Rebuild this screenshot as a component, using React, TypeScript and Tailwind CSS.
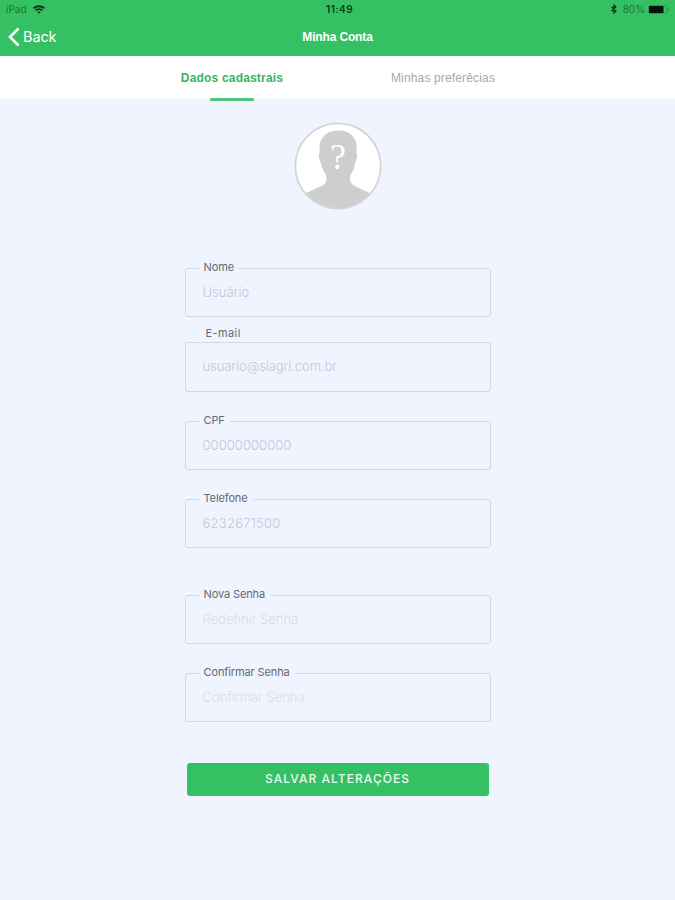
import { clsx } from 'clsx';

const fields = [
  { label: 'Nome', value: 'Usuário', box: 'mt-[58px] h-[49px]', text: 'text-[#c3c6d6]' },
  { label: 'E-mail', value: 'usuario@siagri.com.br', box: 'mt-[25px] h-[50px]', text: 'text-[#c3c6d6] tracking-[-0.08px]', raised: true },
  { label: 'CPF', value: '00000000000', box: 'mt-[29px] h-[49px]', text: 'text-[#c3c6d6] tracking-[0.05px]' },
  { label: 'Telefone', value: '6232671500', box: 'mt-[29px] h-[49px]', text: 'text-[#c3c6d6] tracking-[0.25px]' },
  { label: 'Nova Senha', placeholder: 'Redefinir Senha', box: 'mt-[47px] h-[49px]', text: 'text-[#d9dce6]' },
  { label: 'Confirmar Senha', placeholder: 'Confirmar Senha', box: 'mt-[29px] h-[49px]', text: 'text-[#d9dce6]' },
];

function StatusBar() {
  return (
    <div className="flex h-[18px] items-center px-[6px] text-[10px] leading-none text-[#1d7038]">
      <div className="flex flex-1 items-center gap-[6px]">
        <span>iPad</span>
        <svg width="12" height="9" viewBox="0 0 12 9" fill="none" stroke="#0b3519" strokeWidth="2">
          <path d="M0.7 3.2C3.7 0.5 8.3 0.5 11.3 3.2" />
          <path d="M2.8 5.5C4.6 3.8 7.4 3.8 9.2 5.5" />
          <path d="M6 8.8L4.3 7.1C5.3 6.3 6.7 6.3 7.7 7.1Z" fill="#0b3519" stroke="none" />
        </svg>
      </div>
      <span className="relative left-[2px] font-semibold tracking-[0.45px] text-[#0c3a1b]">11:49</span>
      <div className="flex flex-1 items-center justify-end">
        <svg width="6" height="10" viewBox="0 0 6 10" fill="none" stroke="#0b3519" strokeWidth="1.2">
          <path d="M0.6 2.7L5 7L3 9V1L5 3L0.6 7.3" />
        </svg>
        <span className="ml-[6px]">80%</span>
        <svg className="ml-[3px] -mr-[1px]" width="22" height="9" viewBox="0 0 22 9">
          <rect x="0.5" y="0.5" width="18.5" height="8" rx="1.5" fill="none" stroke="#249648" strokeWidth="0.8" />
          <rect x="1" y="1" width="14.5" height="7" rx="0.5" fill="#03140a" />
          <path d="M20 3V6C21.3 5.6 21.3 3.4 20 3Z" fill="#249648" />
        </svg>
      </div>
    </div>
  );
}

function Avatar() {
  return (
    <svg className="mx-auto mt-[23px] block" width="88" height="88" viewBox="0 0 88 88">
      <defs>
        <clipPath id="avatar">
          <circle cx="44" cy="44" r="42.5" />
        </clipPath>
      </defs>
      <circle cx="44" cy="44" r="42.5" fill="#fff" />
      <path
        clipPath="url(#avatar)"
        fill="#cecece"
        d="M44 8.5C55 8 62.500 15 62.800 25C62.800 27.500 62.400 29 62.200 30.500C64 32 63 37.500 61 41C60.500 46 58.500 50 56.500 53C55.500 57 56 60 58 62C62.500 66 71 68 77 72L88 88H0L11 72C17 68 25.500 66 30.500 62C32.500 60 32.800 57 32 53C30 50 27.500 46 27 41C24.500 37.500 24 32 25.800 30.500C25.500 28.500 25.400 27 25.400 25C25.700 15 33.500 8.500 44 8.500Z"
      />
      <circle cx="44" cy="44" r="42.7" fill="none" stroke="#d5d5d8" strokeWidth="1.8" />
      <text x="44" y="47" textAnchor="middle" fontSize="36" fill="#fff" className="font-['Liberation_Serif',serif]">
        ?
      </text>
    </svg>
  );
}

export default function App() {
  return (
    <div className="h-[900px] w-[675px] overflow-hidden bg-[#f0f4ff] font-['Inter',sans-serif]">
      <header className="h-[56px] bg-[#35c163]">
        <StatusBar />
        <div className="flex h-[37px] items-center px-[8px] text-white">
          <button className="flex flex-1 items-center gap-[3px] text-[14.5px] tracking-[-0.1px]">
            <svg width="12" height="20" viewBox="0 0 12 20" fill="none" stroke="currentColor" strokeWidth="2.6">
              <path d="M10.500 1.500L2 10L10.500 18.500" />
            </svg>
            <span>Back</span>
          </button>
          <h1 className="font-['Liberation_Sans',sans-serif] text-[12px] font-bold tracking-[-0.15px]">Minha Conta</h1>
          <div className="flex-1" />
        </div>
      </header>

      <nav className="flex h-[43px] items-start justify-center bg-white text-[12px]">
        <button className="relative flex w-[211px] justify-center">
          <span className="flex h-[43px] items-center font-['Liberation_Sans',sans-serif] font-bold tracking-[0.18px] text-[#37b562]">
            Dados cadastrais
          </span>
          <span className="absolute -bottom-[2px] left-1/2 h-[3px] w-[44px] -translate-x-1/2 rounded-full bg-[#4cc475]" />
        </button>
        <button className="flex w-[211px] justify-center">
          <span className="flex h-[43px] items-center font-['Liberation_Sans',sans-serif] tracking-[0.15px] text-[#a8a8a8]">
            Minhas preferêcias
          </span>
        </button>
      </nav>

      <main>
        <Avatar />
        <form className="mx-auto w-[306px]">
          {fields.map((field) => (
            <div
              key={field.label}
              className={clsx('relative flex items-center rounded-[3px] border border-[#d3d6e3] px-[17px]', field.box)}
            >
              <label
                className={clsx(
                  'absolute bg-[#f0f4ff] px-[5px] text-[11px] leading-[14px] whitespace-nowrap text-[#65676f]',
                  field.raised ? '-top-[17px] left-[15px] tracking-[0.4px]' : '-top-[9px] left-[13px] tracking-[-0.12px]',
                )}
              >
                {field.label}
              </label>
              <span className={clsx('text-[13px] font-light', field.text)}>{field.value ?? field.placeholder}</span>
            </div>
          ))}
          <button
            type="button"
            className="mx-auto mt-[41px] flex h-[33px] w-[302px] items-center justify-center rounded-[3px] bg-[#35c163] pb-[2px] text-[12px] font-medium tracking-[1.05px] text-[#e9faef]"
          >
            SALVAR ALTERAÇÕES
          </button>
        </form>
      </main>
    </div>
  );
}
